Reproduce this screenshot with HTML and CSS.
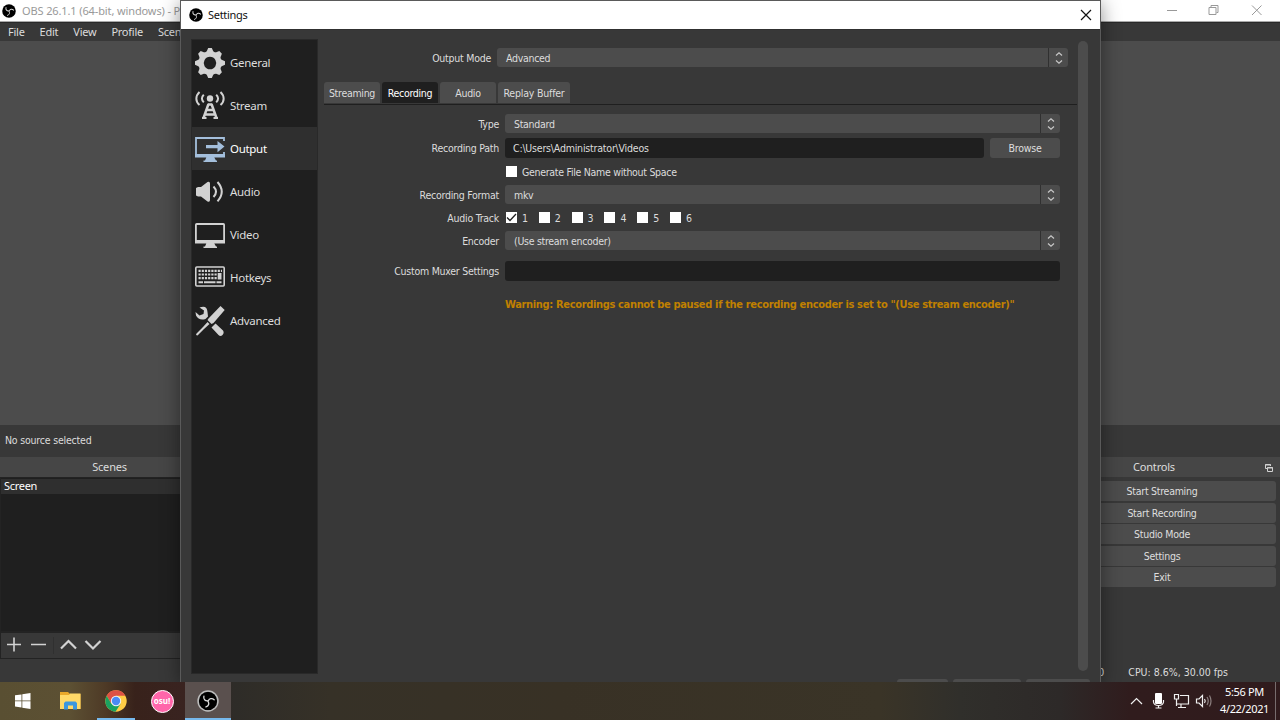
FILE: index.html
```
<!DOCTYPE html>
<html lang="en">
<head>
  <meta charset="UTF-8">
  <title>OBS 26.1.1 - Settings</title>
  <link rel="stylesheet" href="styles.css">
</head>
<body>
  <!-- Shared icons -->
  <svg class="defs">
    <symbol id="obs" viewBox="0 0 32 32">
      <circle cx="16" cy="16" r="15.5"/>
      <g fill="none" stroke="#dcdcdc" stroke-width="2.200" stroke-linecap="round">
        <path id="blade" d="M16 16.500C18.500 20 17.500 24.500 12.500 26"/>
        <use href="#blade" transform="rotate(120 16 16)"/>
        <use href="#blade" transform="rotate(240 16 16)"/>
      </g>
    </symbol>
    <symbol id="arrows" viewBox="0 0 8 14">
      <path d="M1 4.500L4 1.800L7 4.500M1 9.500L4 12.200L7 9.500" fill="none" stroke="#c8c8c8" stroke-width="1.200"/>
    </symbol>
  </svg>

  <div class="desktop">
    <!-- Main window -->
    <div class="main-window">
      <div class="main-title">
        <svg class="logo"><use href="#obs"/></svg>
        <span class="main-name">OBS 26.1.1 (64-bit, windows) - Profile</span>
        <svg class="window-buttons" width="100" height="20" viewBox="0 0 100 20" fill="none" stroke="#999">
          <path d="M1 9.500H11M43 6.500H50V13.500H43ZM45 6V4.500H52V11.500H50.500M86 4.500L95.500 14M95.500 4.500L86 14"/>
        </svg>
      </div>
      <div class="menu">
        <span>File</span><span>Edit</span><span>View</span><span>Profile</span><span>Scene Collection</span>
      </div>
      <div class="preview"></div>
      <div class="source-bar">No source selected</div>
      <div class="docks">
        <div class="dock scenes">
          <div class="dock-title">Scenes</div>
          <div class="scene-list"><div class="scene">Screen</div></div>
          <div class="scene-tools">
            <svg width="110" height="24" viewBox="0 0 110 24" fill="none" stroke="#d2d2d2" stroke-width="1.600">
              <path d="M6 11.500H20M13 4.500V18.500M30 11.500H45"/>
              <path d="M60 15.500L67.500 8L75 15.500M84.500 8L92 15.500L99.500 8" stroke-width="2.200"/>
              <path d="M52.500 4V21" stroke="#303030" stroke-width="1"/>
            </svg>
          </div>
        </div>
        <div class="dock controls">
          <div class="dock-title">Controls
            <svg class="float-icon" width="8" height="8" viewBox="0 0 8 8" fill="none" stroke="#d0d0d0">
              <path d="M2 4.500H.5V.5H5.500V2M0 1H6M2.500 3.500H7.500V7.500H2.500ZM2 4H8"/>
            </svg>
          </div>
          <div class="control-list">
            <button>Start Streaming</button>
            <button>Start Recording</button>
            <button>Studio Mode</button>
            <button>Settings</button>
            <button>Exit</button>
          </div>
        </div>
      </div>
      <div class="status"><span class="kbps">kb/s 0</span><span class="cpu">CPU: 8.6%, 30.00 fps</span></div>
    </div>

    <!-- Settings dialog -->
    <div class="dialog">
      <div class="dialog-title">
        <svg class="logo"><use href="#obs"/></svg>
        <span>Settings</span>
        <svg class="close" width="12" height="12" viewBox="0 0 12 12"><path d="M1 1L11 11M11 1L1 11" stroke="#111" stroke-width="1.200"/></svg>
      </div>
      <div class="dialog-body">
        <div class="sidebar">
          <div class="item">
            <svg viewBox="0 0 30 30">
              <path fill="none" stroke="#d2d2d2" stroke-width="5.500" d="M15 6A9 9 0 1 1 14.990 6Z"/>
              <g fill="#d2d2d2">
                <path id="tooth" d="M11 5L13.200 0H16.800L19 5Z"/>
                <use href="#tooth" transform="rotate(45 15 15)"/>
                <use href="#tooth" transform="rotate(90 15 15)"/>
                <use href="#tooth" transform="rotate(135 15 15)"/>
                <use href="#tooth" transform="rotate(180 15 15)"/>
                <use href="#tooth" transform="rotate(225 15 15)"/>
                <use href="#tooth" transform="rotate(270 15 15)"/>
                <use href="#tooth" transform="rotate(315 15 15)"/>
              </g>
            </svg>
            <span>General</span>
          </div>
          <div class="item">
            <svg viewBox="0 0 30 30" fill="none" stroke="#d2d2d2" stroke-width="2">
              <circle cx="15" cy="7.500" r="3.200" fill="#d2d2d2" stroke="none"/>
              <path d="M4.500 1C.3 5 .3 10.500 4.500 14M25.500 1C29.700 5 29.700 10.500 25.500 14M8.800 3.800C6.300 6.200 6.300 9 8.800 11.400M21.200 3.800C23.700 6.200 23.700 9 21.200 11.400"/>
              <path d="M13.500 13L8.500 27M16.500 13L21.500 27M13 13.500H17M12 19H18M10 23.500H20" stroke-width="2.500"/>
              <path d="M7 27H11.500M18.500 27H23"/>
            </svg>
            <span>Stream</span>
          </div>
          <div class="item selected">
            <svg viewBox="0 0 30 30" fill="#a4bfdc">
              <path d="M29 7V4H1V21H29V18" fill="none" stroke="#a4bfdc" stroke-width="1.800"/>
              <path d="M0 20H30V23.500H0ZM11.500 23H19L21 26.500H22V28H8.500V26.500H10ZM11 11H22.500V7L29.500 12.600L22.500 18.200V14.200H11Z"/>
            </svg>
            <span>Output</span>
          </div>
          <div class="item">
            <svg viewBox="0 0 30 30" fill="#d2d2d2">
              <path d="M1 11L3 10H6L12.500 5Q15 4 15 6.500V23Q15 25.500 12.500 24.500L6 19.500H3L1 18.500Z"/>
              <path d="M18.500 9.500Q23.500 14.700 18.500 20M22.500 5Q31 14.700 22.500 24.300" fill="none" stroke="#d2d2d2" stroke-width="2"/>
            </svg>
            <span>Audio</span>
          </div>
          <div class="item">
            <svg viewBox="0 0 30 30" fill="#d2d2d2">
              <rect x=".9" y="4" width="28.200" height="17" fill="none" stroke="#d2d2d2" stroke-width="1.800" rx=".8"/>
              <path d="M0 20H30V23.500H0ZM11.500 23H19L21 26.500H22V28H8.500V26.500H10Z"/>
            </svg>
            <span>Video</span>
          </div>
          <div class="item">
            <svg viewBox="0 0 30 30" fill="none" stroke="#d2d2d2">
              <rect x=".8" y="4" width="28.400" height="19" rx="1" stroke-width="1.600"/>
              <path d="M3.500 7.800H27M3.500 11.500H22M3.500 15.200H22" stroke-width="2.200" stroke-dasharray="2.200 1"/>
              <path d="M3.500 19.200H8M9 19.200H20.500M21.500 19.200H26.500" stroke-width="2"/>
              <path d="M24.600 10V16.500" stroke-width="3.800"/>
            </svg>
            <span>Hotkeys</span>
          </div>
          <div class="item">
            <svg viewBox="0 0 30 30" fill="#d2d2d2">
              <path d="M25.500 0L29.700 4L18.500 17L16.500 18L12.500 14L13.500 12.500ZM12.500 16L14.500 18L9 23L2.500 29.500L1 29L1.500 27.500L8 21Z"/>
              <path d="M4.500 1.500Q12-1.500 12.500 6L13 10.500L10.500 13Q4 15 1 9.500L.5 6L4.500 9.500L8.500 8L9 4.500ZM20.500 17.500L28 24.500Q29.500 27 27.500 29T23.500 29L16.500 21.500Z"/>
            </svg>
            <span>Advanced</span>
          </div>
        </div>

        <div class="content">
          <div class="row mode">
            <label>Output Mode</label>
            <div class="select"><span>Advanced</span><i><svg><use href="#arrows"/></svg></i></div>
          </div>
          <div class="tabs">
            <div class="tab">Streaming</div>
            <div class="tab active">Recording</div>
            <div class="tab">Audio</div>
            <div class="tab wide">Replay Buffer</div>
          </div>
          <div class="form">
            <div class="row">
              <label>Type</label>
              <div class="select"><span>Standard</span><i><svg><use href="#arrows"/></svg></i></div>
            </div>
            <div class="row path">
              <label>Recording Path</label>
              <div class="field">C:\Users\Administrator\Videos</div>
              <button class="browse">Browse</button>
            </div>
            <div class="row">
              <label></label>
              <div class="check"><b></b>Generate File Name without Space</div>
            </div>
            <div class="row">
              <label>Recording Format</label>
              <div class="select"><span>mkv</span><i><svg><use href="#arrows"/></svg></i></div>
            </div>
            <div class="row">
              <label>Audio Track</label>
              <div class="check track"><b><svg width="11" height="11" viewBox="0 0 11 11"><path d="M1 5.500L4 8.500L10 2" fill="none" stroke="#222" stroke-width="1.300"/></svg></b>1</div>
              <div class="check track"><b></b>2</div>
              <div class="check track"><b></b>3</div>
              <div class="check track"><b></b>4</div>
              <div class="check track"><b></b>5</div>
              <div class="check track"><b></b>6</div>
            </div>
            <div class="row">
              <label>Encoder</label>
              <div class="select"><span>(Use stream encoder)</span><i><svg><use href="#arrows"/></svg></i></div>
            </div>
            <div class="row muxer">
              <label>Custom Muxer Settings</label>
              <div class="field"></div>
            </div>
            <div class="row warning-row">
              <label></label>
              <div class="warning">Warning: Recordings cannot be paused if the recording encoder is set to "(Use stream encoder)"</div>
            </div>
          </div>
        </div>
        <div class="scrollbar"></div>
      </div>
      <div class="dialog-buttons"><div class="ok"></div><div class="cancel"></div><div class="apply"></div></div>
    </div>

    <!-- Taskbar -->
    <div class="taskbar">
      <div class="task start">
        <svg width="16" height="16" viewBox="0 0 16 16" fill="#fff"><path d="M0 2.300L6.500 1.400V7.500H0ZM7.300 1.300L15.500 0V7.500H7.300ZM0 8.300H6.500V14.500L0 13.600ZM7.300 8.300H15.500V16L7.300 14.700Z"/></svg>
      </div>
      <div class="task">
        <svg width="21" height="18" viewBox="0 0 21 18"><path d="M0 0H8L10 2H20.500V17H0Z" fill="#e8a82a"/><path d="M0 3H9L10 1.500H20.500V17H0Z" fill="#ffd968"/><path d="M4 17.500V11L5.500 9.500H15.500L17 11V17.500H13V13.500H8V17.500Z" fill="#3c97de"/></svg>
      </div>
      <div class="task open">
        <svg width="22" height="22" viewBox="0 0 22 22"><circle cx="11" cy="11" r="10.700" fill="#ffcd46"/><path d="M1.700 5.700A10.700 10.700 0 0 1 20.300 5.700H11L6.300 13.700Z" fill="#dd5144"/><path d="M1.700 5.700A10.700 10.700 0 0 0 10.500 21.700L15.600 13.700H6.300Z" fill="#1aa260"/><circle cx="11" cy="11" r="5.200" fill="#f4f4f4"/><circle cx="11" cy="11" r="4.200" fill="#4a8af4"/></svg>
      </div>
      <div class="task"><div class="osu">osu!</div></div>
      <div class="task current">
        <svg width="22" height="22"><circle cx="11" cy="11" r="10.700" fill="#bcbcbc"/><use href="#obs" x="1.500" y="1.500" width="19" height="19"/></svg>
      </div>
      <div class="tray">
        <svg width="82" height="20" viewBox="0 0 82 20" fill="none" stroke="#f0f0f0" stroke-width="1.200">
          <path d="M1 13L6.500 7.500L12 13"/>
          <rect x="25" y="2" width="7" height="11" rx="1" fill="#fff" stroke="none"/>
          <path d="M23.500 9V11Q24 14.500 28.500 14.500T33.500 11V9M28.500 14.500V17M25.500 17H31.500"/>
          <path d="M50 4.500H58.500V13H46.500V9.500M51 13V16.500M48 16.500H56M44.500 3.500H48.500V8H44.500ZM46.500 8V15"/>
          <path d="M66.500 8H69L72.500 4.500V15.500L69 12H66.500ZM74.500 8Q76 10 74.500 12"/>
          <path d="M77 6Q79.500 10 77 14M79.500 4.500Q82.500 10 79.500 15.500" stroke="#8d8080"/>
        </svg>
        <div class="clock">5:56 PM<br>4/22/2021</div>
        <div class="show-desktop"></div>
      </div>
    </div>
  </div>
</body>
</html>
```

FILE: styles.css
```
* {
  box-sizing: border-box;
}

body {
  margin: 0;
  overflow: hidden;
  background: #383838;
  color: #dcdcdc;
  font-family: "Noto Sans", "Open Sans", sans-serif;
  font-size: 11px;
}

svg {
  display: block;
  flex: none;
}

button {
  border: none;
  border-radius: 3px;
  background: #4c4c4c;
  color: #dedede;
  font: inherit;
  letter-spacing: inherit;
  padding: 0;
}

.defs {
  position: absolute;
  width: 0;
  height: 0;
}

.desktop {
  position: relative;
  width: 1280px;
  height: 720px;
  overflow: hidden;
  display: flex;
  flex-direction: column;
}

.logo {
  width: 14px;
  height: 14px;
}

/* main window */
.main-window {
  height: 682px;
  display: flex;
  flex-direction: column;
}

.main-title {
  height: 22px;
  background: #fff;
  border-bottom: 1px solid #aaa;
  display: flex;
  align-items: center;
  padding: 0 14px 0 2px;
  color: #999;
}

.main-name {
  margin-left: 6px;
  flex: 1;
  white-space: nowrap;
  letter-spacing: -0.12px;
}

.menu {
  height: 19px;
  border-top: 1px solid #292929;
  display: flex;
  align-items: center;
  gap: 15px;
  padding: 0 0 2px 8px;
  letter-spacing: -0.25px;
}

.preview {
  height: 384px;
  background: #4c4c4c;
}

.source-bar {
  height: 32px;
  padding: 7px 5px;
  line-height: 16px;
}

.docks {
  height: 201px;
  display: flex;
  justify-content: space-between;
}

.dock-title {
  height: 20px;
  line-height: 20px;
  background: #464646;
  text-align: center;
  position: relative;
  letter-spacing: -0.2px;
}

.scenes {
  width: 219px;
}

.scene-list {
  height: 155px;
  background: #1f1f1f;
  border: 1px solid #232323;
  padding-top: 1px;
}

.scene {
  height: 15px;
  line-height: 14px;
  background: #2f2f2f;
  color: #fff;
  padding-left: 3px;
  letter-spacing: -0.3px;
}

.scene-tools {
  height: 27px;
  border: 1px solid #232323;
}

.controls {
  width: 236px;
}

.controls .dock-title {
  padding-right: 16px;
}

.float-icon {
  position: absolute;
  right: 7px;
  top: 7px;
}

.control-list {
  padding: 4px 4px 0 0;
  display: flex;
  flex-direction: column;
  gap: 1.500px;
  letter-spacing: -0.27px;
}

.control-list button {
  height: 20px;
  padding-left: 4px;
}

.status {
  height: 23px;
  line-height: 28px;
  display: flex;
  justify-content: flex-end;
  padding-right: 52px;
}

.kbps {
  margin-right: 24px;
}

/* settings dialog */
.dialog {
  position: absolute;
  left: 180px;
  top: 0;
  width: 921px;
  height: 682px;
  background: #383838;
  border: 1px solid #5a5a5a;
  border-bottom: none;
  box-shadow: 0 3px 18px rgba(0, 0, 0, 0.45);
  overflow: hidden;
}

.dialog-title {
  height: 28px;
  background: #fff;
  color: #111;
  display: flex;
  align-items: center;
  padding: 0 8px;
}

.dialog-title span {
  margin: -2px 0 0 5px;
  flex: 1;
  letter-spacing: -0.3px;
}

.dialog-body {
  height: 646px;
  padding: 10px 12px 0 10px;
  display: flex;
  border-top: 1px solid #303030;
}

.sidebar {
  width: 127px;
  height: 635px;
  background: #1f1f1f;
  border: 1px solid #292929;
  margin-top: -1px;
  padding-top: 1px;
  flex: none;
}

.item {
  height: 43px;
  display: flex;
  align-items: center;
  gap: 5px;
  padding-left: 3px;
  font-size: 11.500px;
  letter-spacing: -0.3px;
}

.item svg {
  width: 30px;
  height: 30px;
}

.item.selected {
  background: #2f2f2f;
  color: #fff;
}

.content {
  width: 760px;
  padding: 8px 0 0 6px;
  flex: none;
  font-family: "DejaVu Sans Condensed", "DejaVu Sans", sans-serif;
  font-stretch: condensed;
  font-size: 10.500px;
  letter-spacing: -0.29px;
}

.browse,
.control-list,
.source-bar,
.status {
  font-family: "DejaVu Sans Condensed", "DejaVu Sans", sans-serif;
  font-stretch: condensed;
  font-size: 10.500px;
}

.source-bar {
  letter-spacing: -0.2px;
}

.row {
  height: 19px;
  display: flex;
  align-items: center;
}

.row label {
  width: 175px;
  margin-right: 6px;
  text-align: right;
  flex: none;
  white-space: nowrap;
  letter-spacing: -0.25px;
}

.row.mode {
  width: 744px;
}

.mode label {
  width: 167px;
}

.select {
  flex: 1;
  height: 19px;
  background: #4c4c4c;
  border-radius: 3px;
  display: flex;
  align-items: center;
  padding-left: 9px;
}

.select span {
  flex: 1;
}

.select i {
  width: 20px;
  height: 19px;
  border-left: 1px solid #303030;
  display: flex;
  align-items: center;
  justify-content: center;
}

.select i svg {
  width: 8px;
  height: 14px;
}

.tabs {
  margin-top: 15px;
  height: 23px;
  width: 753px;
  display: flex;
  gap: 2px;
  border-bottom: 1px solid #1f1f1f;
}

.tab {
  width: 56px;
  height: 21px;
  line-height: 22px;
  background: #4c4c4c;
  border-radius: 3px 3px 0 0;
  text-align: center;
}

.tab.active {
  background: #1f1f1f;
  color: #fff;
}

.tab.wide {
  width: 72px;
  letter-spacing: -0.2px;
}

.form {
  width: 736px;
  padding-top: 9px;
  display: flex;
  flex-direction: column;
  gap: 4px;
}

.row.path {
  height: 20px;
  margin-top: 1px;
}

.field {
  flex: 1;
  height: 20px;
  line-height: 20px;
  background: #1f1f1f;
  border-radius: 3px;
  padding-left: 8px;
  letter-spacing: -0.2px;
}

.browse {
  width: 70px;
  height: 20px;
  margin-left: 6px;
  letter-spacing: -0.2px;
}

.check {
  display: flex;
  align-items: center;
}

.check b {
  width: 11px;
  height: 11px;
  background: #fff;
  margin: 0 5px 0 1px;
}

.track {
  width: 32.800px;
}

.row.muxer {
  height: 20px;
  margin-top: 7px;
}

.warning-row {
  margin-top: 10px;
}

.warning {
  color: #c08000;
  font-weight: bold;
  font-size: 11px;
  white-space: nowrap;
  letter-spacing: -0.340px;
}

.scrollbar {
  width: 10px;
  height: 630px;
  margin-top: 1px;
  background: #4c4c4c;
  border-radius: 5px;
  flex: none;
}

.dialog-buttons {
  display: flex;
  justify-content: flex-end;
  gap: 5px;
  padding: 4px 10px 0 0;
}

.dialog-buttons div {
  height: 20px;
  background: #4c4c4c;
  border-radius: 3px;
}

.ok {
  width: 51px;
}

.cancel {
  width: 68px;
}

.apply {
  width: 64px;
}

/* taskbar */
.taskbar {
  position: relative;
  height: 38px;
  display: flex;
  background: linear-gradient(90deg, #594f32 0, #5c5033 70px, #4e3a26 105px, #38221b 135px, #392320 185px, #2e2c28 235px, #363127 330px, #383125 560px, #3a3427 880px, #302f2b 960px, #2d2928 1060px, #301c1d 1130px, #301b1d 1280px);
}

.task {
  width: 46px;
  display: flex;
  align-items: center;
  justify-content: center;
}

.task.start {
  width: 47px;
  padding-right: 2px;
}

.task.open {
  width: 38px;
  margin: 0 4px;
  border-bottom: 2px solid #76b9ed;
  padding-top: 2px;
}

.task.current {
  background: #5a504e;
  border-bottom: 2px solid #76b9ed;
  padding-top: 2px;
}

.osu {
  width: 23px;
  height: 23px;
  border: 1.500px solid #fff;
  border-radius: 50%;
  background: #ff66aa;
  color: #fff;
  font-size: 8px;
  font-weight: bold;
  line-height: 19px;
  text-align: center;
}

.tray {
  margin-left: auto;
  display: flex;
  align-items: center;
  color: #fff;
}

.clock {
  width: 63px;
  margin-top: -2px;
  padding-left: 2px;
  text-align: center;
  line-height: 17px;
  letter-spacing: -0.350px;
  white-space: nowrap;
}

.show-desktop {
  width: 5px;
  height: 38px;
  border-left: 1px solid #776c6d;
}
```
